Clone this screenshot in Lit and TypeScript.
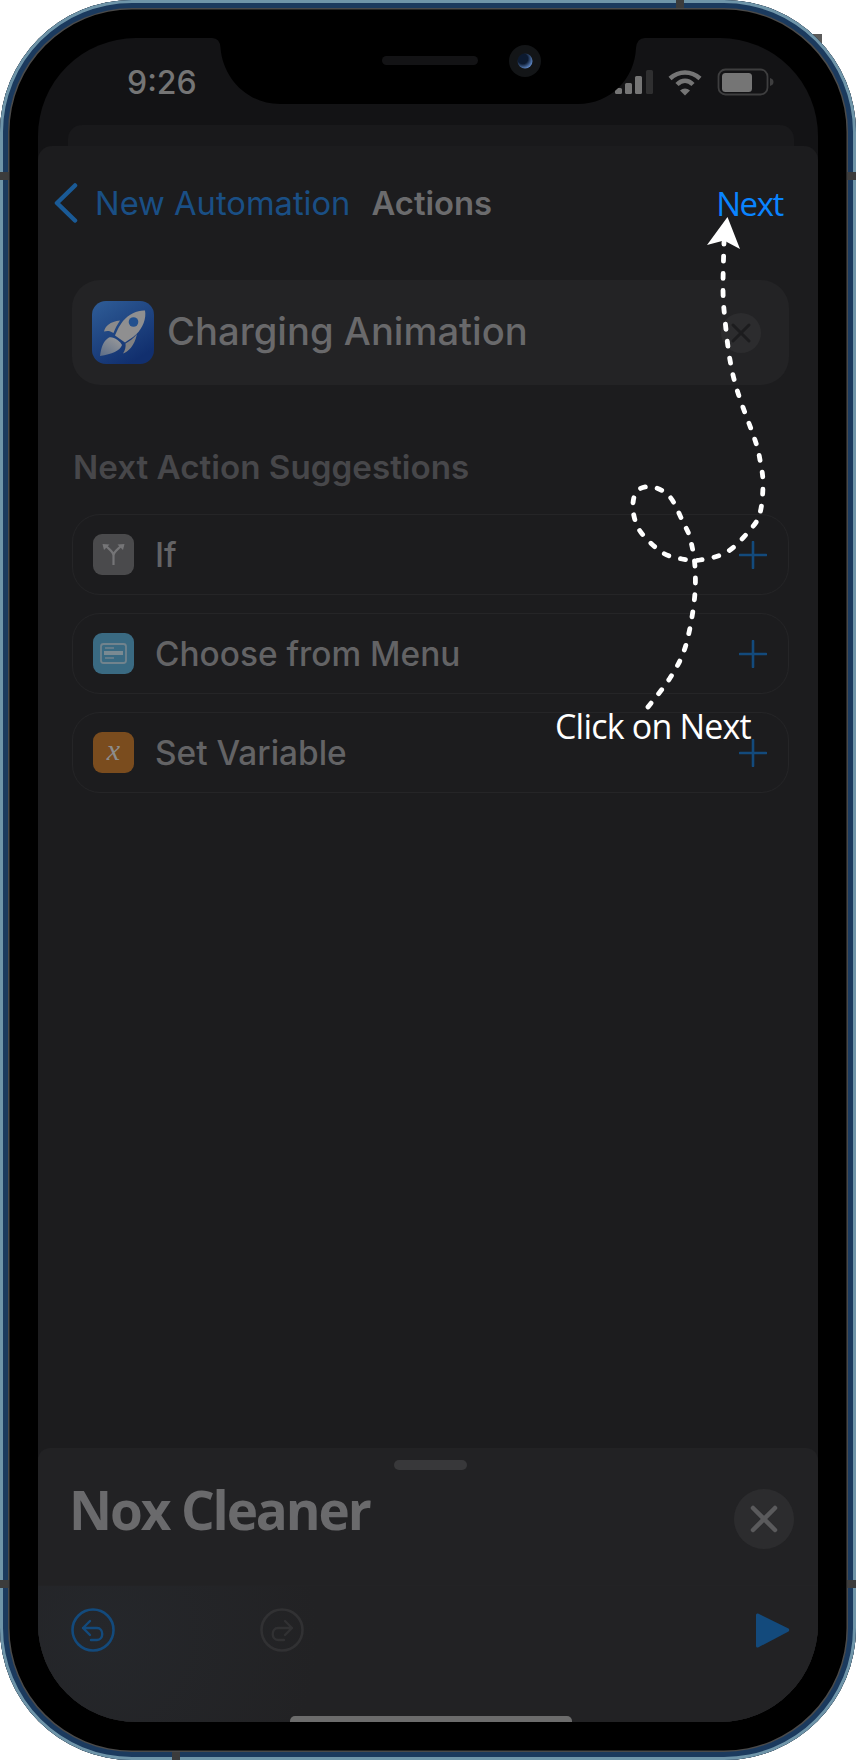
import { LitElement, css, html, svg } from 'lit';
import { customElement } from 'lit/decorators.js';

// points of the hand drawn dashed line, from the label up to the arrow head
const TRAIL: number[][] = [
    [648, 707], [670, 678], [685, 648], [694, 603], [695, 567], [690, 538], [683, 522],
    [670, 497], [653, 487], [638, 490], [633, 503], [635, 520], [643, 535], [663, 553],
    [682, 559], [700, 560], [727, 552], [750, 530], [760, 513], [763, 483], [760, 460],
    [755, 440], [738, 393], [730, 360], [725, 320], [723, 290], [724, 242],
];

const smoothPath = (pts: number[][]) => {
    let d = `M${pts[0][0]} ${pts[0][1]}`;
    for (let i = 0; i < pts.length - 1; i++) {
        const p0 = pts[Math.max(i - 1, 0)];
        const p1 = pts[i];
        const p2 = pts[i + 1];
        const p3 = pts[Math.min(i + 2, pts.length - 1)];
        const c1 = [p1[0] + (p2[0] - p0[0]) / 6, p1[1] + (p2[1] - p0[1]) / 6];
        const c2 = [p2[0] - (p3[0] - p1[0]) / 6, p2[1] - (p3[1] - p1[1]) / 6];
        d += ` C${c1[0]} ${c1[1]} ${c2[0]} ${c2[1]} ${p2[0]} ${p2[1]}`;
    }
    return d;
};

const plusIcon = html`
    <svg class="plus" width="28" height="28" viewBox="0 0 28 28">
        <path d="M14 1V27M1 14H27" stroke="#134a7c" stroke-width="2.6" stroke-linecap="round" fill="none"/>
    </svg>`;

const ifIcon = html`
    <svg width="41" height="41" viewBox="0 0 41 41" fill="none">
        <path d="M20.5 31V21.5C20.5 18 17 16 13.5 12.5M20.5 21.5C20.5 18 24 16 27.5 12.5" stroke="#757577" stroke-width="2.2"/>
        <path d="M9.5 10L16.5 10.500L11 16ZM31.500 10L24.500 10.500L30 16Z" fill="#757577"/>
    </svg>`;

const menuIcon = html`
    <svg width="41" height="41" viewBox="0 0 41 41" fill="none">
        <rect x="8" y="11" width="25" height="19" rx="2.500" stroke="#71838d" stroke-width="1.800"/>
        <path d="M12 15H21M12 25H21" stroke="#71838d" stroke-width="1.500"/>
        <rect x="11" y="18" width="19" height="4" fill="#7a8a92"/>
    </svg>`;

const rows = [
    { name: 'If', tile: 'gray', icon: ifIcon },
    { name: 'Choose from Menu', tile: 'teal', icon: menuIcon },
    { name: 'Set Variable', tile: 'orange', icon: html`<span class="var">x</span>` },
];

@customElement('app-root')
export class AppRoot extends LitElement {

    static styles = css`
    :host {
        display: block;
        position: relative;
        width: 856px;
        height: 1760px;
        background: #fff;
        overflow: hidden;
        font-family: Inter, "Liberation Sans", sans-serif;
    }

    .phone {
        position: relative;
        box-sizing: border-box;
        width: 856px;
        height: 1760px;
        padding: 38px;
        background: #000;
        border-radius: 132px;
        box-shadow: inset 0 0 0 3px #6f95a9, inset 0 0 0 8px #1b3a5e, inset 0 0 0 9.500px #4a4a4a;
    }

    .tick { position: absolute; background: #3c3c3c; }
    .tick.bump { left: 811px; top: 34px; width: 11px; height: 11px; background: #5a5a5a; }
    .tick.top { left: 676px; top: 0; width: 8px; height: 8px; }
    .tick.bottom { left: 172px; bottom: 0; width: 8px; height: 8px; }
    .tick.l1 { left: 0; top: 172px; width: 9px; height: 8px; }
    .tick.r1 { right: 0; top: 172px; width: 9px; height: 8px; }
    .tick.l2 { left: 0; top: 1580px; width: 9px; height: 8px; }
    .tick.r2 { right: 0; top: 1580px; width: 9px; height: 8px; }

    .screen {
        position: relative;
        display: flex;
        flex-direction: column;
        height: 100%;
        background: #131315;
        border-radius: 98px;
        overflow: hidden;
    }

    /* notch */
    .notch { position: absolute; left: 174px; top: 0; }

    .status {
        display: flex;
        justify-content: space-between;
        align-items: flex-start;
        height: 87px;
        flex: none;
        padding: 0 43px 0 89px;
        box-sizing: border-box;
    }
    .time {
        margin-top: 25px;
        font-size: 32px;
        line-height: 39px;
        font-weight: 500;
        color: #757575;
    }
    .status svg { margin-top: 27px; }

    .back-sheet {
        flex: none;
        height: 21px;
        margin: 0 24px 0 30px;
        background: #19191b;
        border-radius: 14px 14px 0 0;
    }

    .sheet {
        flex: 1;
        display: flex;
        flex-direction: column;
        background: #1c1c1e;
        border-radius: 14px 14px 0 0;
    }

    .nav {
        display: flex;
        align-items: center;
        height: 114px;
        margin-bottom: 20px;
        padding: 0 35px 0 16px;
    }
    .nav svg { margin-right: 17px; }
    .back { font-size: 32.700px; color: #1a4f85; margin-right: 21px; }
    .title { font-size: 32.800px; font-weight: 600; color: #6b6b6d; }
    .next {
        margin-left: auto;
        font-family: "Open Sans", sans-serif;
        font-size: 33px;
        letter-spacing: -1.400px;
        color: #0a84ff;
    }

    .card {
        display: flex;
        align-items: center;
        height: 105px;
        margin: 0 29px 0 34px;
        padding: 0 28px 0 20px;
        background: #232325;
        border-radius: 28px;
    }
    .rocket { width: 62px; height: 63px; flex: none; margin-right: 13px; }
    .card-name { font-size: 38.200px; font-weight: 500; color: #69696b; margin-top: -3px; }
    .clear { margin-left: auto; flex: none; }

    h2 {
        margin: 64px 29px 29px 35px;
        font-size: 33.200px;
        line-height: 36px;
        font-weight: 600;
        color: #47474a;
    }

    .rows { display: flex; flex-direction: column; gap: 18px; margin: 0 29px 0 34px; }
    .row {
        display: flex;
        align-items: center;
        box-sizing: border-box;
        height: 81px;
        padding: 0 21px 0 20px;
        border: 1.500px solid #252527;
        border-radius: 28px;
    }
    .tile {
        display: flex;
        align-items: center;
        justify-content: center;
        flex: none;
        width: 41px;
        height: 41px;
        margin-right: 21px;
        border-radius: 9px;
    }
    .tile.gray { background: #4a4a4c; }
    .tile.teal { background: #3a6a82; }
    .tile.orange { background: #7a4c1e; }
    .var {
        font-family: "Liberation Serif", serif;
        font-style: italic;
        font-size: 30px;
        line-height: 30px;
        margin-top: -6px;
        color: #8d8d8d;
    }
    .row-name { font-size: 33.400px; font-weight: 500; color: #636365; }
    .plus { margin-left: auto; flex: none; }

    .panel {
        margin-top: auto;
        flex: none;
        display: flex;
        flex-direction: column;
        height: 274px;
        background: #222224;
        border-radius: 12px 12px 0 0;
    }
    .handle {
        align-self: center;
        flex: none;
        width: 73px;
        height: 10px;
        margin: 12px 0 0 5px;
        background: #38383a;
        border-radius: 5px;
    }
    .panel-head {
        display: flex;
        justify-content: space-between;
        align-items: center;
        height: 60px;
        margin-top: 19px;
        padding: 0 24px 0 31px;
    }
    .panel-name {
        font-family: "Open Sans", sans-serif;
        font-size: 53px;
        line-height: 60px;
        font-weight: 700;
        letter-spacing: -2.100px;
        margin-bottom: 18px;
        color: #6a6a6c;
    }
    .toolbar {
        flex: 1;
        display: flex;
        align-items: flex-start;
        margin-top: 36px;
        padding: 22px 27px 0 33px;
        background: radial-gradient(circle at 60px 50px, #25272b 0, #222224 220px);
        border-top: 1px solid #232325;
    }
    .toolbar .redo { margin-left: 145px; }
    .toolbar .play { margin-left: auto; margin-top: 2px; }

    .home {
        position: absolute;
        left: 252px;
        bottom: 0;
        width: 282px;
        height: 6px;
        background: #6c6c6c;
        border-radius: 5px 5px 0 0;
    }

    /* the tutorial annotation drawn over the phone */
    .trail { position: absolute; left: 0; top: 0; pointer-events: none; }
    .hint {
        position: absolute;
        left: 555px;
        top: 703px;
        font-family: "Open Sans", sans-serif;
        font-size: 34px;
        line-height: 46px;
        letter-spacing: -0.800px;
        white-space: nowrap;
        color: #fff;
    }
    `;

    render() {
        return html`
            <div class="tick bump"></div>
            <div class="phone">
                <div class="screen">
                    <div class="status">
                        <span class="time">9:26</span>
                        ${this.statusIcons()}
                    </div>
                    <div class="back-sheet"></div>
                    <div class="sheet">
                        <div class="nav">
                            <svg width="24" height="40" viewBox="0 0 24 40" fill="none">
                                <path d="M21 2.500L3 20L21 37.500" stroke="#1a5a96" stroke-width="4.500" stroke-linecap="round" stroke-linejoin="round"/>
                            </svg>
                            <span class="back">New Automation</span>
                            <span class="title">Actions</span>
                            <span class="next">Next</span>
                        </div>
                        <div class="card">
                            ${this.rocket()}
                            <span class="card-name">Charging Animation</span>
                            <svg class="clear" width="40" height="40" viewBox="0 0 40 40" fill="none">
                                <circle cx="20" cy="20" r="20" fill="#2c2c2e"/>
                                <path d="M12 12L28 28M28 12L12 28" stroke="#1c1c1e" stroke-width="3" stroke-linecap="round"/>
                            </svg>
                        </div>
                        <h2>Next Action Suggestions</h2>
                        <div class="rows">
                            ${rows.map((r) => html`
                                <div class="row">
                                    <div class="tile ${r.tile}">${r.icon}</div>
                                    <span class="row-name">${r.name}</span>
                                    ${plusIcon}
                                </div>
                            `)}
                        </div>
                        <div class="panel">
                            <div class="handle"></div>
                            <div class="panel-head">
                                <span class="panel-name">Nox Cleaner</span>
                                <svg width="60" height="60" viewBox="0 0 60 60" fill="none">
                                    <circle cx="30" cy="30" r="30" fill="#2c2c2e"/>
                                    <path d="M19 19L41 41M41 19L19 41" stroke="#5a5a5c" stroke-width="4.500" stroke-linecap="round"/>
                                </svg>
                            </div>
                            <div class="toolbar">
                                ${this.historyIcon('#134a7c', false)}
                                ${this.historyIcon('#313133', true)}
                                <svg class="play" width="36" height="40" viewBox="0 0 36 40">
                                    <path d="M3 3.500L33.500 18.500Q35 20 33.500 21.500L3 37.500Q1 38 1 36V5Q1 3 3 3.500Z" fill="#134a7c"/>
                                </svg>
                            </div>
                        </div>
                    </div>
                    <svg class="notch" width="433" height="67" viewBox="0 0 433 67">
                        <defs>
                            <radialGradient id="lens" cx="0.35" cy="0.35" r="0.75">
                                <stop offset="0.45" stop-color="#0c1a30"/>
                                <stop offset="1" stop-color="#6d9be0"/>
                            </radialGradient>
                        </defs>
                        <path d="M0 0Q8 0 8.500 10C11 40 35 66 68 66H366C399 66 423 40 424 10Q425 0 433 0Z" fill="#000"/>
                        <rect x="170" y="18" width="96" height="9" rx="4.500" fill="#131315"/>
                        <circle cx="313" cy="23" r="16" fill="#131517"/>
                        <circle cx="313" cy="23" r="7.500" fill="url(#lens)"/>
                    </svg>
                    <div class="home"></div>
                </div>
                <div class="tick top"></div>
                <div class="tick bottom"></div>
                <div class="tick l1"></div>
                <div class="tick r1"></div>
                <div class="tick l2"></div>
                <div class="tick r2"></div>
            </div>
            <svg class="trail" width="856" height="1760" viewBox="0 0 856 1760" fill="none">
                <path d=${smoothPath(TRAIL)} stroke="#fff" stroke-width="4.800" stroke-linecap="round" stroke-dasharray="5 12"/>
                <path d="M727.500 217L740 249L724 240.500L707 245Z" fill="#fff"/>
            </svg>
            <span class="hint">Click on Next</span>
        `;
    }

    statusIcons() {
        return html`
            <svg width="165" height="36" viewBox="610 65 165 36" fill="none">
                <rect x="615" y="88" width="7" height="6" rx="1.500" fill="#757575"/>
                <rect x="625" y="83" width="7" height="11" rx="1.500" fill="#757575"/>
                <rect x="635" y="76" width="7" height="18" rx="1.500" fill="#757575"/>
                <rect x="646" y="70" width="7" height="24" rx="1.500" fill="#2f2f30"/>
                <path d="M670 78.500C679 70.500 691 70.500 700 78.500" stroke="#757575" stroke-width="4.500"/>
                <path d="M677 84.500C682 79.500 688 79.500 693 84.500" stroke="#757575" stroke-width="4.500"/>
                <path d="M680 90.500C683 87.800 687 87.800 690 90.500L685 95.500Z" fill="#757575"/>
                <rect x="718.500" y="69.500" width="49" height="25" rx="7" stroke="#3e3e3f" stroke-width="1.800"/>
                <rect x="722" y="73" width="30" height="19" rx="3.500" fill="#757575"/>
                <path d="M770 78C772.500 78.800 773.500 80 773.500 82C773.500 84 772.500 85.200 770 86Z" fill="#3e3e3f"/>
            </svg>`;
    }

    rocket() {
        return html`
            <svg class="rocket" viewBox="0 0 62 63" fill="none">
                <defs>
                    <linearGradient id="rocket-bg" x1="0" y1="0" x2="0.6" y2="1">
                        <stop offset="0" stop-color="#2f5d97"/>
                        <stop offset="1" stop-color="#112f6e"/>
                    </linearGradient>
                    <linearGradient id="flame" x1="0.1" y1="1" x2="0.9" y2="0">
                        <stop offset="0" stop-color="#5f6f88"/>
                        <stop offset="1" stop-color="#9a9a9a"/>
                    </linearGradient>
                </defs>
                <rect width="62" height="63" rx="14" fill="url(#rocket-bg)"/>
                <path d="M53 9.500C54.500 17 51 27 44 33.500C40 37 36 39 33 41.500L23 34.500C24.500 31 27 25 31 20C37 13 46 9 53 9.500Z" fill="#8f8f90"/>
                <path d="M12 30.500C13 25.500 18 20.500 28 19.500C25 24 23.500 27 21.500 32C18 29.500 15 29.500 12 30.500Z" fill="#8a8a8b"/>
                <path d="M31 52.500C36 51 42.500 45 45 33C41.500 37.500 37 40.500 33.500 42.500C34 46 33 49.500 31 52.500Z" fill="#808082"/>
                <path d="M8 55C9 46 12 39 17 36.500C21 35 28 40 30 44C28 50 20 53 8 55Z" fill="url(#flame)"/>
                <circle cx="41.500" cy="21" r="4.800" fill="#22508e"/>
            </svg>`;
    }

    historyIcon(color: string, mirrored: boolean) {
        // undo glyph, the redo button is the same one flipped
        const glyph = svg`
            <circle cx="22" cy="22" r="20.500" stroke=${color} stroke-width="2.600"/>
            <path d="M19 13L12 20L19 27M12 20H26C33 20 33 32 26 32H20" stroke=${color} stroke-width="2.400" stroke-linecap="round" stroke-linejoin="round"/>`;
        return html`
            <svg class=${mirrored ? 'redo' : ''} width="44" height="44" viewBox="0 0 44 44" fill="none">
                ${mirrored ? svg`<g transform="matrix(-1 0 0 1 44 0)">${glyph}</g>` : glyph}
            </svg>`;
    }
}
